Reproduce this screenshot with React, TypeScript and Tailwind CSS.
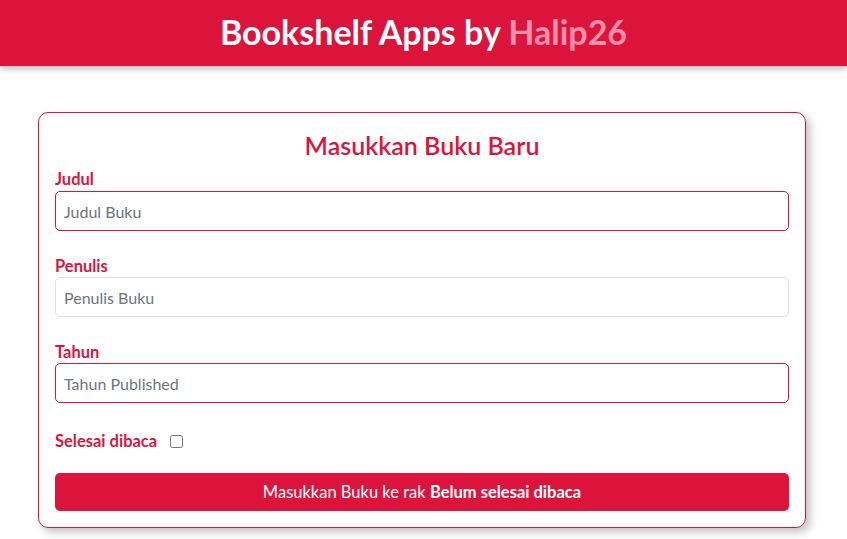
import React from "react";

export default function App() {
  return (
    <div className="min-h-[539px] bg-white" style={{ fontFamily: "Lato, 'Noto Sans', sans-serif" }}>
      <header className="h-[66px] bg-[#dc143c] flex items-center justify-center shadow-[0_3px_6px_rgba(0,0,0,0.25)]">
        <h1 className="text-[34px] font-bold text-white leading-none -mt-[2px]">
          Bookshelf Apps by <span className="text-[#ff8fab]">Halip26</span>
        </h1>
      </header>
      <main className="px-[38px] pt-[46px]">
        <section className="w-[768px] border border-[#dc143c] rounded-[10px] shadow-[4px_4px_8px_rgba(0,0,0,0.25)] px-4 pt-[18px] pb-4">
          <h2 className="text-center text-[25px] font-semibold text-[#dc143c] leading-[28px]">Masukkan Buku Baru</h2>
          <div className="mt-[10px] flex flex-col">
            <label className="text-[16.5px] font-bold text-[#dc143c] leading-[20px]">Judul</label>
            <input
              className="mt-[2px] h-[40px] w-full rounded-[5px] border border-[#dc143c] px-[8px] text-[16px] text-gray-700 placeholder:text-[#6c757d] outline-none"
              placeholder="Judul Buku"
            />
          </div>
          <div className="mt-[25px] flex flex-col">
            <label className="text-[16.5px] font-bold text-[#dc143c] leading-[20px]">Penulis</label>
            <input
              className="mt-[1px] h-[40px] w-full rounded-[5px] border border-[#dee2e6] px-[8px] text-[16px] text-gray-700 placeholder:text-[#6c757d] outline-none"
              placeholder="Penulis Buku"
            />
          </div>
          <div className="mt-[25px] flex flex-col">
            <label className="text-[16.5px] font-bold text-[#dc143c] leading-[20px]">Tahun</label>
            <input
              className="mt-[1px] h-[40px] w-full rounded-[5px] border border-[#dc143c] px-[8px] text-[16px] text-gray-700 placeholder:text-[#6c757d] outline-none"
              placeholder="Tahun Published"
            />
          </div>
          <div className="mt-[28px] flex items-center gap-[13px]">
            <label className="text-[16.5px] font-bold text-[#dc143c] leading-[20px]">Selesai dibaca</label>
            <input type="checkbox" className="w-[13px] h-[13px]" />
          </div>
          <button className="mt-[22px] h-[38px] w-full rounded-[5px] bg-[#dc143c] text-white text-[16.5px]">
            Masukkan Buku ke rak <span className="font-bold">Belum selesai dibaca</span>
          </button>
        </section>
      </main>
    </div>
  );
}
